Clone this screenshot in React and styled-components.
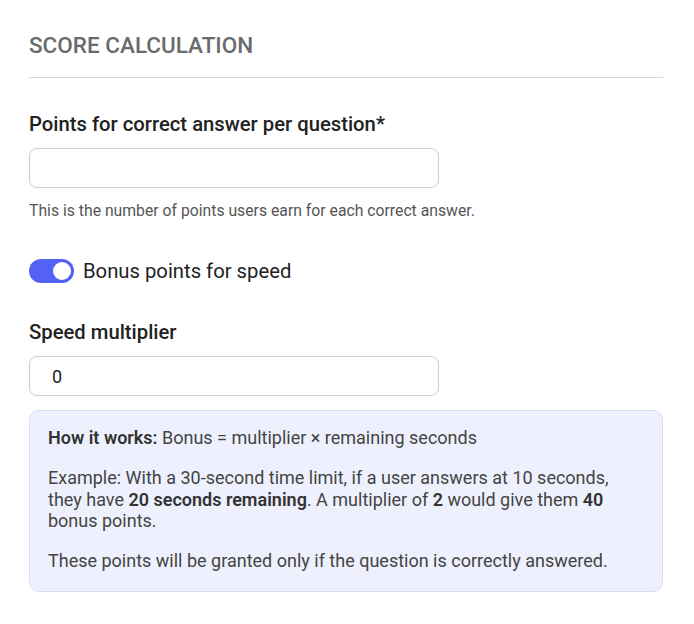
import styled, { createGlobalStyle } from "styled-components";

const Global = createGlobalStyle`
  body {
    margin: 0;
    background: #ffffff;
    font-family: Roboto, "Liberation Sans", sans-serif;
  }
`;

const Page = styled.div`
  width: 634px;
  padding: 32px 0 0 29px;
`;

const Heading = styled.h2`
  margin: 0;
  padding-bottom: 19px;
  border-bottom: 1px solid #d9d9d9;
  font-size: 22.5px;
  line-height: 26px;
  font-weight: 500;
  color: #6b6b6b;
`;

const Label = styled.label`
  display: block;
  margin-top: ${(p) => p.$top}px;
  font-size: 20.25px;
  line-height: 24px;
  font-weight: 500;
  color: #222222;
`;

const Input = styled.input`
  display: block;
  box-sizing: border-box;
  width: 410px;
  height: 40px;
  margin-top: 12px;
  padding: 0 22px;
  border: 1px solid #cfcfcf;
  border-radius: 8px;
  font-family: inherit;
  font-size: 18px;
  color: #222222;
  outline: none;
`;

const Helper = styled.p`
  margin: 13px 0 0;
  font-size: 15.75px;
  line-height: 20px;
  color: #555555;
`;

const ToggleRow = styled.div`
  display: flex;
  align-items: center;
  gap: 9px;
  margin-top: 38px;
  height: 24px;
`;

const Switch = styled.span`
  position: relative;
  width: 45px;
  height: 24px;
  border-radius: 12px;
  background: #5561f5;
  &::after {
    content: "";
    position: absolute;
    top: 3px;
    right: 3px;
    width: 18px;
    height: 18px;
    border-radius: 50%;
    background: #ffffff;
  }
`;

const ToggleText = styled.span`
  font-size: 20.25px;
  color: #222222;
`;

const InfoBox = styled.div`
  margin-top: 14px;
  padding: 16px 18px 19px;
  border: 1px solid #d5dcf6;
  border-radius: 10px;
  background: #eef1fd;
  color: #444444;
  font-size: 18px;
  line-height: 21.5px;
  p {
    margin: 0 0 18.5px;
  }
  p:last-child {
    margin-bottom: 0;
  }
  b {
    font-weight: 600;
    color: #333333;
  }
`;

export default function App() {
  return (
    <Page>
      <Global />
      <Heading>SCORE CALCULATION</Heading>

      <Label $top={34}>Points for correct answer per question*</Label>
      <Input type="text" defaultValue="" />
      <Helper>This is the number of points users earn for each correct answer.</Helper>

      <ToggleRow>
        <Switch />
        <ToggleText>Bonus points for speed</ToggleText>
      </ToggleRow>

      <Label $top={37}>Speed multiplier</Label>
      <Input type="text" defaultValue="0" />

      <InfoBox>
        <p>
          <b>How it works:</b> Bonus = multiplier × remaining seconds
        </p>
        <p>
          Example: With a 30-second time limit, if a user answers at 10 seconds, they
          have <b>20 seconds remaining</b>. A multiplier of <b>2</b> would give them{" "}
          <b>40</b> bonus points.
        </p>
        <p>These points will be granted only if the question is correctly answered.</p>
      </InfoBox>
    </Page>
  );
}
